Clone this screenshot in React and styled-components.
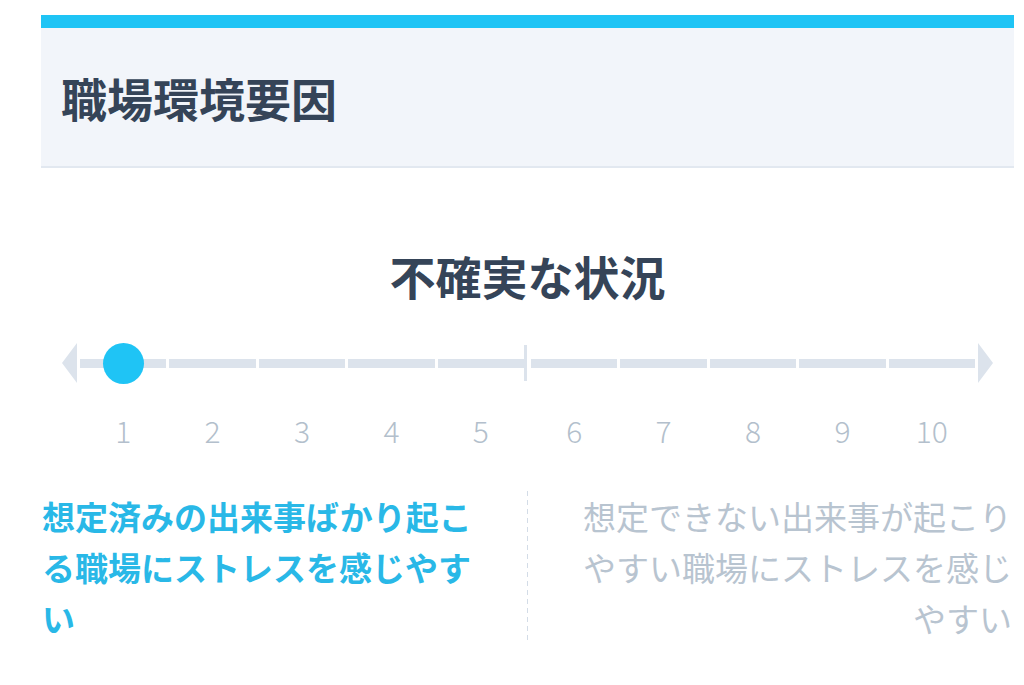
import styled, { createGlobalStyle } from "styled-components";

const GlobalStyle = createGlobalStyle`
  html, body {
    margin: 0;
    padding: 0;
    background: #ffffff;
  }
  body {
    font-family: "Noto Sans CJK JP", "Noto Sans", sans-serif;
  }
`;

const Styled = {
  Page: styled.div`
    padding: 15px 10px 0 41px;
  `,

  Card: styled.section`
    width: 973px;
    background: #ffffff;
  `,

  TopBar: styled.div`
    height: 13px;
    background: #1fc4f5;
  `,

  Header: styled.header`
    height: 138px;
    padding-left: 20px;
    display: flex;
    align-items: center;
    background: #f2f5fa;
    border-bottom: 2px solid #e2e8f0;

    h1 {
      margin: 0;
      font-size: 46px;
      font-weight: 700;
      line-height: 1;
      color: #354458;
    }
  `,

  Body: styled.div`
    padding-top: 84px;
  `,

  Question: styled.h2`
    margin: 0;
    text-align: center;
    font-size: 46px;
    font-weight: 700;
    line-height: 1;
    color: #354458;
  `,

  Scale: styled.div`
    margin: 45px 0 0 21px;
    width: 931px;
    display: flex;
    align-items: flex-start;
  `,

  Half: styled.div`
    flex: 1;
    display: flex;
    align-items: flex-start;
    gap: 3px;
  `,

  Arrow: styled.svg`
    flex: none;
    width: 15px;
    height: 40px;
    display: block;
  `,

  Tick: styled.div`
    flex: none;
    width: 3px;
    height: 36px;
    margin: 2px 4px 0 0;
    background: #dce3ec;
  `,

  Segment: styled.div`
    flex: 1;
    display: flex;
    flex-direction: column;
    align-items: center;
  `,

  BarSlot: styled.div`
    position: relative;
    width: 100%;
    height: 40px;
    display: flex;
    align-items: center;

    &::before {
      content: "";
      display: block;
      width: 100%;
      height: 9px;
      background: #dce3ec;
    }
  `,

  Knob: styled.span`
    position: absolute;
    left: 50%;
    top: 50%;
    width: 41px;
    height: 41px;
    margin: -20px 0 0 -20px;
    border-radius: 50%;
    background: #1fc4f5;
  `,

  Number: styled.span`
    margin-top: 32px;
    font-size: 30px;
    font-weight: 300;
    line-height: 1;
    color: #b3bfcc;
  `,

  Descriptions: styled.div`
    margin-top: 46px;
    display: flex;
    align-items: stretch;
  `,

  Description: styled.p`
    margin: 0;
    width: 456px;
    font-size: 33px;
    line-height: 51px;
    font-weight: ${({ $active }) => ($active ? 700 : 400)};
    color: ${({ $active }) => ($active ? "#29b8e7" : "#b8c4d0")};
    text-align: ${({ $align }) => $align};
  `,

  Column: styled.div`
    flex: 1;
    display: flex;
    justify-content: ${({ $side }) => ($side === "left" ? "flex-start" : "flex-end")};
    padding: ${({ $side }) => ($side === "left" ? "0 0 0 1px" : "0 2px 0 0")};
  `,

  Divider: styled.div`
    flex: none;
    width: 1px;
    background: repeating-linear-gradient(
      to bottom,
      #d3dce7 0 5px,
      transparent 5px 9px
    );
  `,
};

const LEFT = [1, 2, 3, 4, 5];
const RIGHT = [6, 7, 8, 9, 10];

function Segment({ value, selected }) {
  return (
    <Styled.Segment>
      <Styled.BarSlot>{selected && <Styled.Knob />}</Styled.BarSlot>
      <Styled.Number>{value}</Styled.Number>
    </Styled.Segment>
  );
}

function App() {
  const selected = 1;
  return (
    <>
      <GlobalStyle />
      <Styled.Page>
        <Styled.Card>
          <Styled.TopBar />
          <Styled.Header>
            <h1>職場環境要因</h1>
          </Styled.Header>

          <Styled.Body>
            <Styled.Question>不確実な状況</Styled.Question>

            <Styled.Scale>
              <Styled.Half>
                <Styled.Arrow viewBox="0 0 15 40">
                  <polygon points="15,0 15,40 0,20" fill="#dce3ec" />
                </Styled.Arrow>
                {LEFT.map((n) => (
                  <Segment key={n} value={n} selected={n === selected} />
                ))}
              </Styled.Half>
              <Styled.Tick />
              <Styled.Half>
                {RIGHT.map((n) => (
                  <Segment key={n} value={n} selected={n === selected} />
                ))}
                <Styled.Arrow viewBox="0 0 15 40">
                  <polygon points="0,0 15,20 0,40" fill="#dce3ec" />
                </Styled.Arrow>
              </Styled.Half>
            </Styled.Scale>

            <Styled.Descriptions>
              <Styled.Column $side="left">
                <Styled.Description $active $align="left">
                  想定済みの出来事ばかり起こる職場にストレスを感じやすい
                </Styled.Description>
              </Styled.Column>
              <Styled.Divider />
              <Styled.Column $side="right">
                <Styled.Description $align="right">
                  想定できない出来事が起こりやすい職場にストレスを感じやすい
                </Styled.Description>
              </Styled.Column>
            </Styled.Descriptions>
          </Styled.Body>
        </Styled.Card>
      </Styled.Page>
    </>
  );
}

export default App;
